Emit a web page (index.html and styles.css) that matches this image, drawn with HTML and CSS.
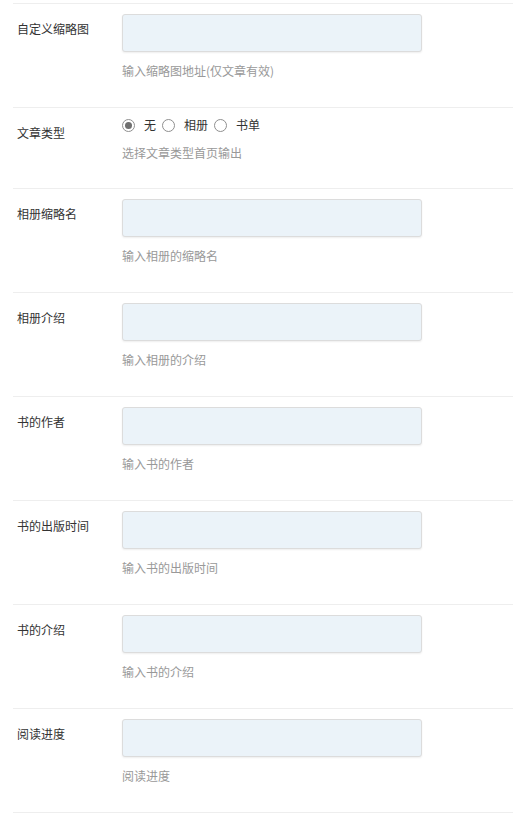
FILE: index.html
```html
<!DOCTYPE html>
<html lang="zh-CN">
<head>
<meta charset="utf-8">
<title>文章设置</title>
<link rel="stylesheet" href="styles.css">
</head>
<body>
<div class="meta-box">
  <div class="row">
    <div class="label">自定义缩略图</div>
    <div class="field">
      <input class="text-input" type="text">
      <p class="help">输入缩略图地址(仅文章有效)</p>
    </div>
  </div>
  <div class="row row-radio">
    <div class="label">文章类型</div>
    <div class="field">
      <div class="radios">
        <label class="radio-item"><input class="radio" type="radio" name="type" checked><span>无</span></label>
        <label class="radio-item"><input class="radio" type="radio" name="type"><span>相册</span></label>
        <label class="radio-item"><input class="radio" type="radio" name="type"><span>书单</span></label>
      </div>
      <p class="help help-radio">选择文章类型首页输出</p>
    </div>
  </div>
  <div class="row">
    <div class="label">相册缩略名</div>
    <div class="field">
      <input class="text-input" type="text">
      <p class="help">输入相册的缩略名</p>
    </div>
  </div>
  <div class="row">
    <div class="label">相册介绍</div>
    <div class="field">
      <input class="text-input" type="text">
      <p class="help">输入相册的介绍</p>
    </div>
  </div>
  <div class="row">
    <div class="label">书的作者</div>
    <div class="field">
      <input class="text-input" type="text">
      <p class="help">输入书的作者</p>
    </div>
  </div>
  <div class="row">
    <div class="label">书的出版时间</div>
    <div class="field">
      <input class="text-input" type="text">
      <p class="help">输入书的出版时间</p>
    </div>
  </div>
  <div class="row">
    <div class="label">书的介绍</div>
    <div class="field">
      <input class="text-input" type="text">
      <p class="help">输入书的介绍</p>
    </div>
  </div>
  <div class="row row-last">
    <div class="label">阅读进度</div>
    <div class="field">
      <input class="text-input" type="text">
      <p class="help">阅读进度</p>
    </div>
  </div>
</div>
</body>
</html>
```

FILE: styles.css
```css
html, body {
  margin: 0;
  padding: 0;
  background: #ffffff;
}

body {
  font-family: "Noto Sans CJK SC", "Noto Sans", sans-serif;
  font-size: 12px;
  color: #333333;
}

.meta-box {
  margin: 3px 0 0 13px;
}

.row {
  display: flex;
  align-items: flex-start;
  border-top: 1px solid #eeeeee;
  padding: 10px 0 27px 4px;
}

.row-radio {
  padding-bottom: 26px;
}

.row-last {
  border-bottom: 1px solid #eeeeee;
}

.label {
  width: 105px;
  flex: none;
  margin-top: 6px;
  line-height: 18px;
  color: #333333;
}

.field {
  display: flex;
  flex-direction: column;
  align-items: flex-start;
}

.text-input {
  box-sizing: border-box;
  width: 300px;
  height: 38px;
  margin: 0;
  padding: 0 8px;
  border: 1px solid #dcdcdc;
  border-radius: 3px;
  background: #ebf3f9;
  box-shadow: 0 1px 2px rgba(0, 0, 0, 0.07);
  font-family: inherit;
  font-size: 12px;
  outline: none;
}

.help {
  margin: 10px 0 0 0;
  line-height: 18px;
  color: #999999;
}

.help-radio {
  margin-top: 12px;
}

.radios {
  display: flex;
  align-items: center;
  height: 14px;
  gap: 6px;
}

.radio-item {
  display: flex;
  align-items: center;
  gap: 9px;
  line-height: 14px;
  color: #333333;
}

.radio {
  -webkit-appearance: none;
  appearance: none;
  box-sizing: border-box;
  width: 13px;
  height: 13px;
  margin: 0;
  border: 1px solid #8f8f8f;
  border-radius: 50%;
  background: #ffffff;
  display: flex;
  align-items: center;
  justify-content: center;
}

.radio:checked::after {
  content: "";
  width: 7px;
  height: 7px;
  border-radius: 50%;
  background: #6f6f6f;
}
```
